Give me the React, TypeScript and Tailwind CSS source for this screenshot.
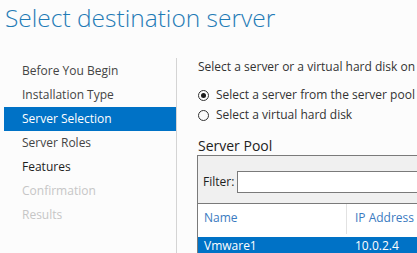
import React from "react"

const steps = [
  { label: "Before You Begin", state: "done" },
  { label: "Installation Type", state: "done" },
  { label: "Server Selection", state: "active" },
  { label: "Server Roles", state: "done" },
  { label: "Features", state: "next" },
  { label: "Confirmation", state: "off" },
  { label: "Results", state: "off" },
]

function Radio({ checked, label }: { checked?: boolean; label: string }) {
  return (
    <div className="flex h-5 items-center">
      <span className="flex h-[11px] w-[11px] items-center justify-center rounded-full border border-[#333]">
        {checked && <span className="h-[5px] w-[5px] rounded-full bg-[#1a1a1a]" />}
      </span>
      <span className="ml-[7px] whitespace-nowrap">{label}</span>
    </div>
  )
}

export default function App() {
  return (
    <div className="h-[253px] w-[417px] overflow-hidden bg-[#fcfcfc] font-['Open_Sans','Noto_Sans',sans-serif] text-[12px] text-[#333]">
      <div className="h-[58px] pl-[5px] pt-[2px]">
        <h1 className="whitespace-nowrap text-[24.5px] font-light leading-[32px] text-[#1f7bb6]">
          Select destination server
        </h1>
      </div>

      <div className="flex h-[195px]">
        {/* wizard steps */}
        <ul className="w-[177px] shrink-0 border-r border-[#d4d4d4] pl-[4px] pt-px">
          {steps.map((s) => (
            <li
              key={s.label}
              className={
                "h-6 pl-[18px] leading-6 whitespace-nowrap " +
                (s.state === "active"
                  ? "bg-[#0072c6] text-white"
                  : s.state === "off"
                  ? "text-[#c6c6c6]"
                  : s.state === "next"
                  ? "text-[#1e1e1e]"
                  : "text-[#444]")
              }
            >
              {s.label}
            </li>
          ))}
        </ul>

        {/* page content */}
        <div className="min-w-0 flex-1 pl-[21px]">
          <p className="mt-px h-4 whitespace-nowrap leading-4">
            Select a server or a virtual hard disk on which to install roles and features.
          </p>

          <div className="mt-[10px]">
            <Radio checked label="Select a server from the server pool" />
            <Radio label="Select a virtual hard disk" />
          </div>

          <h2 className="mt-[12px] h-[18px] whitespace-nowrap text-[14px] leading-[18px] text-[#222]">
            Server Pool
          </h2>

          <div className="-ml-px w-[300px] border border-[#7a7a7a] bg-white">
            <div className="flex items-center border-b border-[#7a7a7a] bg-[#f0f0f0] pb-[10px] pl-[5px] pt-[15px]">
              <span className="w-[34px] text-[#1e1e1e]">Filter:</span>
              <div className="h-[22px] flex-1 border border-[#7a7a7a] bg-white" />
            </div>
            <div className="flex h-[30px] text-[#3a7bbf]">
              <div className="w-[149px] border-r border-[#e2e2e2] pl-[6px] pt-[6px] leading-4">Name</div>
              <div className="whitespace-nowrap pl-[8px] pt-[6px] leading-4">IP Address</div>
            </div>
            <div className="mt-[3px] flex h-[18px] bg-[#0072c6] leading-[18px] text-white">
              <div className="w-[150px] pl-[6px]">Vmware1</div>
              <div className="pl-[7px]">10.0.2.4</div>
            </div>
          </div>
        </div>
      </div>
    </div>
  )
}
